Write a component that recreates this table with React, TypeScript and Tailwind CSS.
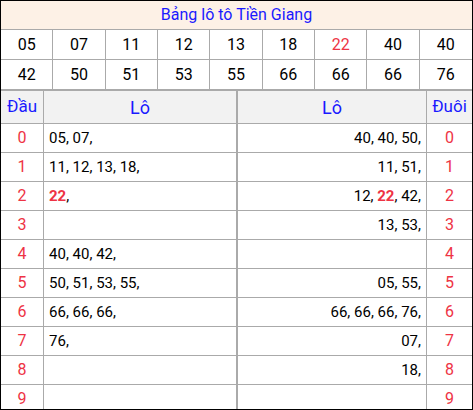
const top = ['05', '07', '11', '12', '13', '18', '22', '40', '40', '42', '50', '51', '53', '55', '66', '66', '66', '76']

// lô lists by đầu (left) and đuôi (right)
const dau: string[][] = [
  ['05', '07'],
  ['11', '12', '13', '18'],
  ['22'],
  [],
  ['40', '40', '42'],
  ['50', '51', '53', '55'],
  ['66', '66', '66'],
  ['76'],
  [],
  [],
]
const duoi: string[][] = [
  ['40', '40', '50'],
  ['11', '51'],
  ['12', '22', '42'],
  ['13', '53'],
  [],
  ['05', '55'],
  ['66', '66', '66', '76'],
  ['07'],
  ['18'],
  [],
]

const Lo = ({ nums }: { nums: string[] }) => (
  <span>
    {nums.map((n, i) => (
      <span key={i}>
        {n === '22' ? <b className="text-[#ee3344]">{n}</b> : n},{i < nums.length - 1 ? ' ' : ''}
      </span>
    ))}
  </span>
)

export default function App() {
  return (
    <div className="w-[473px] h-[410px] overflow-hidden border border-black bg-white text-[15px] text-black font-['Roboto',sans-serif]">
      {/* title */}
      <div className="h-[29px] flex items-center justify-center bg-[#fdf1e6] border-b border-[#aaa] text-[16px] text-[#1a1aff]">
        Bảng lô tô Tiền Giang
      </div>

      {/* numbers */}
      <div className="grid grid-cols-9 text-[16px]">
        {top.map((n, i) => (
          <div
            key={i}
            className={`flex items-center justify-center border-[#aaa] ${i % 9 !== 8 ? 'border-r' : ''} ${
              i < 9 ? 'h-[30px] border-b' : 'h-[29px]'
            } ${n === '22' ? 'text-[#ee3344]' : ''}`}>
            {n}
          </div>
        ))}
      </div>

      {/* đầu / đuôi */}
      <div className="flex border-t-2 border-[#aaa]">
        <div className="w-[237px] border-r-2 border-[#aaa]">
          <div className="flex h-[33px] border-b border-[#aaa] bg-[#f2f2f2] text-[#1a1aff]">
            <div className="w-[43px] border-r border-[#aaa] flex items-center justify-center text-[17px]">Đầu</div>
            <div className="flex-1 flex items-center justify-center text-[18px]">Lô</div>
          </div>
          {dau.map((nums, i) => (
            <div key={i} className="flex h-[29px] border-b border-[#aaa]">
              <div className="w-[43px] border-r border-[#aaa] flex items-center justify-center text-[16px] text-[#ee3344]">{i}</div>
              <div className="flex-1 flex items-center pl-[5px] whitespace-nowrap">
                <Lo nums={nums} />
              </div>
            </div>
          ))}
        </div>
        <div className="flex-1">
          <div className="flex h-[33px] border-b border-[#aaa] bg-[#f2f2f2] text-[#1a1aff]">
            <div className="flex-1 flex items-center justify-center text-[18px]">Lô</div>
            <div className="w-[46px] border-l border-[#aaa] flex items-center justify-center text-[17px]">Đuôi</div>
          </div>
          {duoi.map((nums, i) => (
            <div key={i} className="flex h-[29px] border-b border-[#aaa]">
              <div className="flex-1 flex items-center justify-end pr-[5px] whitespace-nowrap">
                <Lo nums={nums} />
              </div>
              <div className="w-[46px] border-l border-[#aaa] flex items-center justify-center text-[16px] text-[#ee3344]">{i}</div>
            </div>
          ))}
        </div>
      </div>
    </div>
  )
}
